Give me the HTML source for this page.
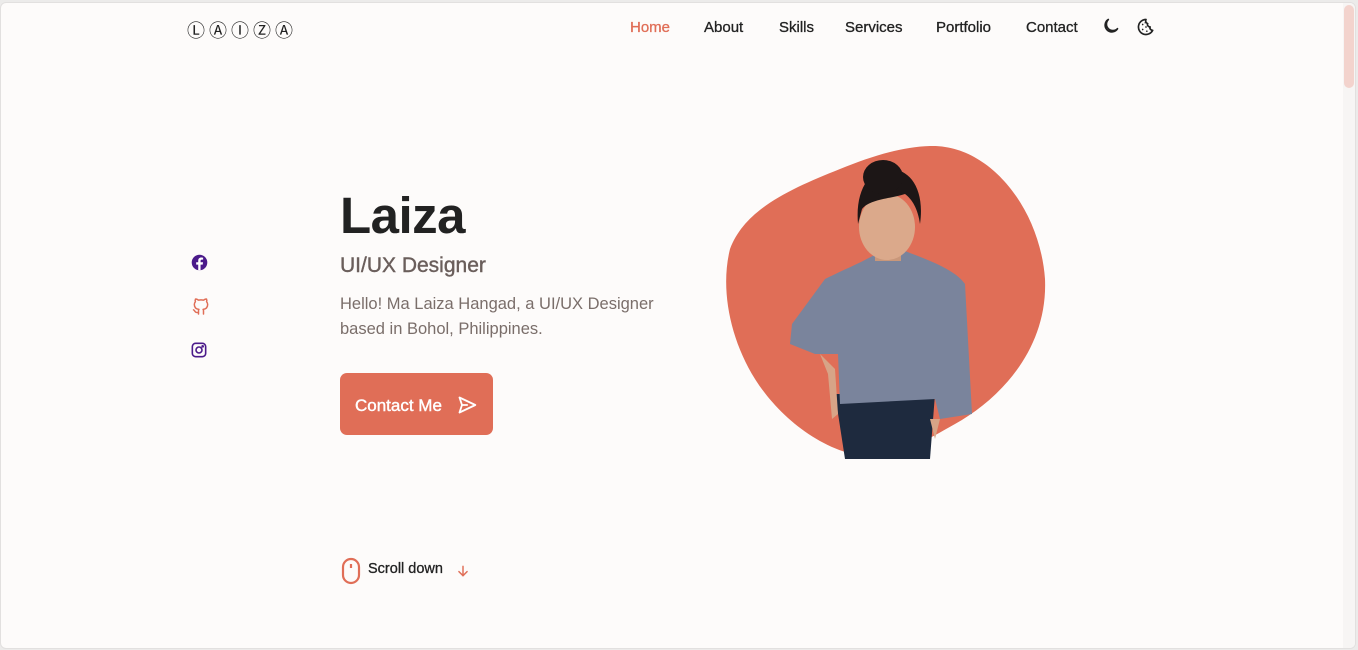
<!DOCTYPE html>
<html><head><meta charset="utf-8"><style>
*{margin:0;padding:0;box-sizing:border-box}
html,body{width:1358px;height:650px;overflow:hidden;background:#ecebea;font-family:"Liberation Sans",sans-serif}
.page{position:absolute;left:0;top:2px;width:1356px;height:647px;background:#fdfbfa;border:1px solid #e2e0df;border-radius:6px;overflow:hidden}
.logo{position:absolute;left:186px;top:14px;font-size:18px;letter-spacing:4px;color:#222;font-family:"DejaVu Sans",sans-serif}
.nav{position:absolute;top:16px;font-size:15px;color:#222;font-weight:500;-webkit-text-stroke:0.3px #222}
.sb{position:absolute;right:0;top:0;width:12px;height:645px;background:#f7f5f4}
.thumb{position:absolute;right:1px;top:2px;width:10px;height:83px;border-radius:5px;background:#f3d3cd}
h1{position:absolute;left:339px;top:183px;font-size:51px;font-weight:bold;color:#222;letter-spacing:-0.5px}
h3{position:absolute;left:339px;top:251px;font-size:21px;font-weight:500;color:#6a5e5b;-webkit-text-stroke:0.4px #6a5e5b}
.desc{position:absolute;left:339px;top:289px;font-size:16.5px;line-height:25px;color:#7a6e6a;width:340px}
.btn{position:absolute;left:339px;top:370px;width:153px;height:62px;background:#e06e57;border-radius:7px;color:#fff;font-size:17px;font-weight:500;padding:23px 0 0 15px;-webkit-text-stroke:0.4px #fff}
.scroll{position:absolute;left:367px;top:558px;font-size:14.5px;color:#222;font-weight:500;-webkit-text-stroke:0.3px #222}
</style></head><body>
<div class="page">
<div class="logo">ⓁⒶⒾⓏⒶ</div>
<div class="nav" style="left:629px;color:#e06e57;-webkit-text-stroke:0.3px #e06e57">Home</div>
<div class="nav" style="left:703px">About</div>
<div class="nav" style="left:778px">Skills</div>
<div class="nav" style="left:844px">Services</div>
<div class="nav" style="left:935px">Portfolio</div>
<div class="nav" style="left:1025px">Contact</div>
<svg style="position:absolute;left:1099px;top:14px" width="20" height="20" viewBox="0 0 24 24" fill="none" stroke="#222" stroke-width="2" stroke-linecap="round" stroke-linejoin="round"><path d="M10 3a8 8 0 1 0 11 11A7 7 0 0 1 10 3z"/></svg>
<svg style="position:absolute;left:1135px;top:14px" width="20" height="20" viewBox="0 0 24 24" fill="none" stroke="#222" stroke-width="2" stroke-linejoin="round"><path d="M12 3a9 9 0 1 0 8 13c-2 0-4-2-3-4-2 0-4-2-3-4-2-1-3-3-2-5z"/><g fill="#222" stroke="none"><circle cx="8" cy="9" r="1"/><circle cx="12" cy="12" r="1"/><circle cx="8" cy="15" r="1"/><circle cx="13" cy="17" r="1"/><circle cx="11" cy="7" r="0.8"/></g></svg>
<svg style="position:absolute;left:190px;top:251px" width="17" height="17" viewBox="0 0 24 24"><circle cx="12" cy="12" r="11" fill="#4b1a8a"/><path d="M13.5 23v-8h3l.5-3.3h-3.5V9.8c0-1 .4-1.8 1.9-1.8h1.7V5.2c-.3 0-1.4-.2-2.6-.2-2.6 0-4.3 1.6-4.3 4.4v2.3H7.3V15h2.9v8z" fill="#fff"/></svg>
<svg style="position:absolute;left:190px;top:293px" width="20" height="21" viewBox="0 0 24 24" fill="none" stroke="#e06e57" stroke-width="1.8" stroke-linecap="round" stroke-linejoin="round"><path d="M9 19c-4.3 1.4-4.3-2.5-6-3m12 5v-3.5c0-1 .1-1.4-.5-2 2.8-.3 5.5-1.4 5.5-6a4.6 4.6 0 0 0-1.3-3.2 4.2 4.2 0 0 0-.1-3.2s-1.1-.3-3.5 1.3a12 12 0 0 0-6.2 0C6.5 2.8 5.4 3.1 5.4 3.1a4.2 4.2 0 0 0-.1 3.2A4.6 4.6 0 0 0 4 9.5c0 4.6 2.7 5.7 5.5 6-.6.6-.6 1.2-.5 2V21"/></svg>
<svg style="position:absolute;left:190px;top:339px" width="16" height="16" viewBox="0 0 24 24" fill="none" stroke="#4b1a8a" stroke-width="2.4"><rect x="2" y="2" width="20" height="20" rx="5"/><circle cx="12" cy="12" r="4.5"/><circle cx="17.5" cy="6.5" r="0.8" fill="#4b1a8a"/></svg>
<h1>Laiza</h1>
<h3>UI/UX Designer</h3>
<div class="desc">Hello! Ma Laiza Hangad, a UI/UX Designer based in Bohol, Philippines.</div>
<div class="btn">Contact Me</div>
<svg style="position:absolute;left:456px;top:392px" width="20" height="20" viewBox="0 0 24 24" fill="none" stroke="#fff" stroke-width="2.2" stroke-linejoin="round"><path d="M3 3l19 9-19 9 3-9z M6 12h7"/></svg>
<svg style="position:absolute;left:719px;top:136px" width="330" height="325" viewBox="0 0 330 325">
<path d="M210 7C270 5 320 70 325 140C328 210 280 260 235 285C200 305 175 318 160 318C110 320 60 280 35 240C10 200 0 150 10 110C25 70 70 50 120 30C150 18 180 8 210 7Z" fill="#e06e57"/>
<path d="M115 255L125 320L210 320L215 255Z" fill="#1e2a3e"/>
<path d="M105 140C125 130 150 120 160 112L185 112C205 120 235 130 245 145L252 275L220 280L215 260L120 265L118 215L95 215L70 205L72 185Z" fill="#7a849c"/>
<path d="M100 215L115 230L118 275L112 280L108 235Z" fill="#d7a487"/>
<path d="M210 280L220 280L215 300Z" fill="#d7a487"/>
<rect x="155" y="100" width="26" height="22" fill="#c9977a"/>
<ellipse cx="167" cy="88" rx="28" ry="33" fill="#dba98b"/>
<path d="M138 85C135 50 150 30 170 30C190 30 205 50 200 85C198 70 192 60 185 55C170 60 150 60 142 70Z" fill="#1c1616"/>
<ellipse cx="163" cy="38" rx="20" ry="17" fill="#1c1616"/>
</svg>
<svg style="position:absolute;left:340px;top:554px" width="20" height="28" viewBox="0 0 20 28" fill="none" stroke="#e06e57" stroke-width="2.2"><rect x="2" y="2" width="16" height="24" rx="8"/><line x1="10" y1="7" x2="10" y2="11"/></svg>
<div class="scroll">Scroll down</div>
<svg style="position:absolute;left:455px;top:561px" width="14" height="14" viewBox="0 0 24 24" fill="none" stroke="#e06e57" stroke-width="2.5" stroke-linecap="round"><path d="M12 4v16M5 13l7 7 7-7"/></svg>
<div class="sb"><div class="thumb"></div></div>
</div>
</body></html>
